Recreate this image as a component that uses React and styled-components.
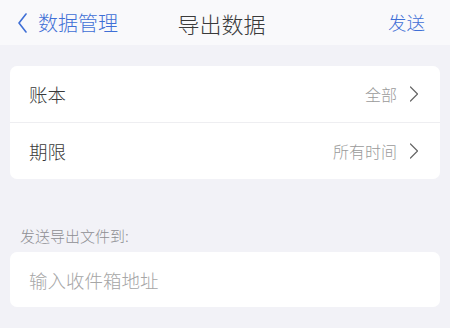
import React from 'react';
import styled, { createGlobalStyle } from 'styled-components';

const BLUE = '#3f6fd6';

const GlobalStyle = createGlobalStyle`
  html, body {
    margin: 0;
    padding: 0;
    background: #f2f2f7;
    font-family: "Noto Sans CJK SC", "Noto Sans", sans-serif;
    font-weight: 300;
  }
`;

const Page = styled.div`
  width: 450px;
  min-height: 328px;
  background: #f2f2f7;
`;

const NavBar = styled.header`
  display: grid;
  grid-template-columns: 1fr auto 1fr;
  align-items: center;
  height: 45px;
  padding: 0 25px 0 18px;
  background: #f9f9fb;
  box-sizing: border-box;
`;

const BackButton = styled.div`
  display: flex;
  align-items: center;
  gap: 11px;
  color: ${BLUE};
  font-size: 20px;
  line-height: 1;
`;

const Title = styled.h1`
  margin: 0;
  font-size: 22px;
  font-weight: 300;
  color: #3a3a3a;
  line-height: 1;
`;

const NavAction = styled.div`
  justify-self: end;
  color: ${BLUE};
  font-size: 18.5px;
  line-height: 1;
`;

const Content = styled.main`
  padding: 21px 10px 0;
`;

const Card = styled.section`
  background: #fff;
  border-radius: 7px;
  overflow: hidden;
`;

const Row = styled.div`
  display: flex;
  align-items: center;
  height: 56px;
  padding: 0 21px 0 19px;
  & + & {
    border-top: 1px solid #eeeef1;
  }
`;

const Label = styled.span`
  flex: 1;
  font-size: 18.5px;
  color: #3a3a3a;
`;

const Value = styled.span`
  font-size: 16px;
  color: #9a9a9a;
  margin-right: 12px;
`;

const SectionLabel = styled.div`
  margin: 47px 0 6px 10px;
  font-size: 15px;
  line-height: 20px;
  color: #8e8e93;
`;

const InputRow = styled.div`
  display: flex;
  align-items: center;
  height: 55px;
  padding: 0 19px;
  font-size: 18.5px;
  color: #a6a6a6;
`;

function BackChevron() {
  return (
    <svg width="9" height="20" viewBox="0 0 9 20">
      <path d="M8 1 L1 10 L8 19" fill="none" stroke={BLUE} strokeWidth="1.6" strokeLinecap="round" strokeLinejoin="round" />
    </svg>
  );
}

function Chevron() {
  return (
    <svg width="10" height="16" viewBox="0 0 10 16">
      <path d="M1.5 1 L8.5 8 L1.5 15" fill="none" stroke="#666" strokeWidth="1.2" strokeLinecap="round" strokeLinejoin="round" />
    </svg>
  );
}

export default function App() {
  const options = [
    { label: '账本', value: '全部' },
    { label: '期限', value: '所有时间' },
  ];

  return (
    <Page>
      <GlobalStyle />
      <NavBar>
        <BackButton>
          <BackChevron />
          数据管理
        </BackButton>
        <Title>导出数据</Title>
        <NavAction>发送</NavAction>
      </NavBar>
      <Content>
        <Card>
          {options.map((o) => (
            <Row key={o.label}>
              <Label>{o.label}</Label>
              <Value>{o.value}</Value>
              <Chevron />
            </Row>
          ))}
        </Card>
        <SectionLabel>发送导出文件到:</SectionLabel>
        <Card>
          <InputRow>输入收件箱地址</InputRow>
        </Card>
      </Content>
    </Page>
  );
}
